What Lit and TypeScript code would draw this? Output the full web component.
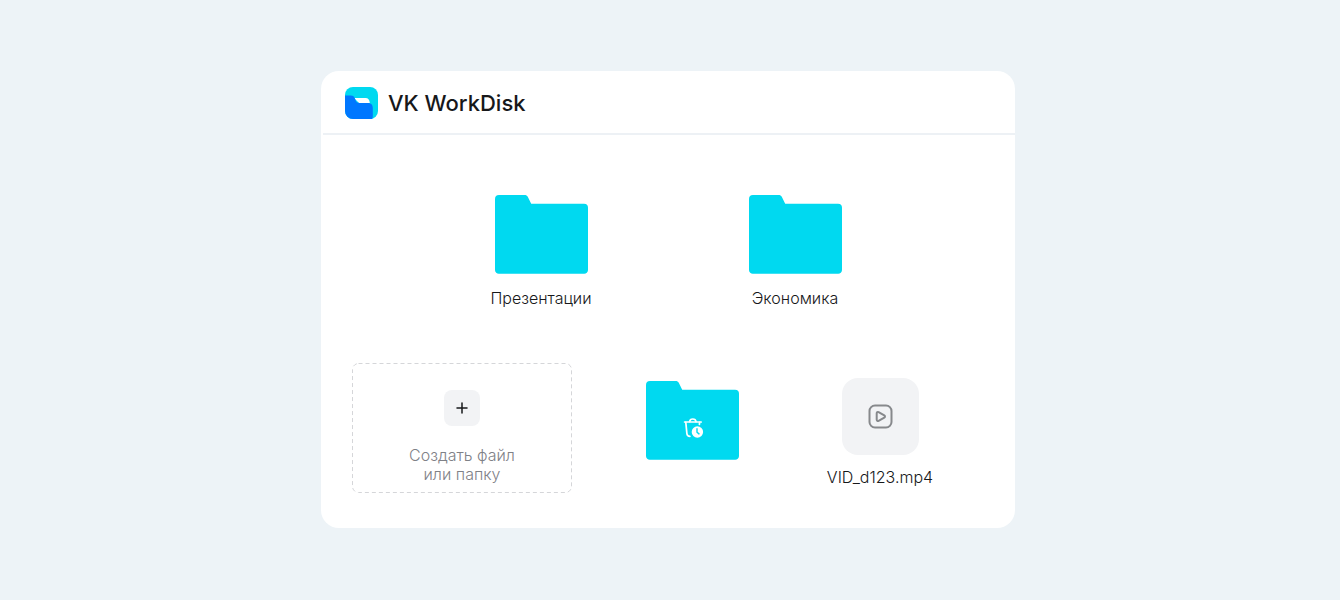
import { LitElement, html, css, svg, nothing } from "lit";
import { customElement, property } from "lit/decorators.js";

@customElement("disk-folder")
export class DiskFolder extends LitElement {
  @property() name = "";
  @property({ type: Boolean }) trash = false;

  static styles = css`
    :host {
      display: block;
    }
    .folder {
      display: flex;
      flex-direction: column;
      align-items: center;
      gap: 14px;
      color: #17181a;
      text-decoration: none;
    }
    .shape {
      display: block;
    }
    .name {
      font-size: 16px;
      line-height: 20px;
      white-space: nowrap;
    }
  `;

  private trashIcon() {
    return svg`
      <g fill="none" stroke="#fff" stroke-width="1.7" stroke-linecap="round" stroke-linejoin="round">
        <path d="M38.6 41h16.6" />
        <path d="M43.6 40.6c.2-1.6 1.4-2.6 3.2-2.6s3 1 3.2 2.6" />
        <path d="M39.8 41.4l1.1 11.2c.2 1.8 1.2 2.7 3 2.7" />
        <path d="M53.6 41.4l-.2 2" />
      </g>
      <circle cx="51.4" cy="51" r="5.7" fill="#fff" />
      <path d="M51 47.8v3.4l2 1.7" fill="none" stroke="#00d9f0" stroke-width="1.4" stroke-linecap="round" />
    `;
  }

  render() {
    return html`
      <a class="folder" href="#" aria-label=${this.name || "Корзина"}>
        <svg class="shape" width="93" height="79" viewBox="0 0 93 79" aria-hidden="true">
          <path
            fill="#00d9f0"
            d="M4 0h25.500c1.600 0 2.600.600 3.400 2l3.300 6.700H89a4 4 0 0 1 4 4V75a3.800 3.800 0 0 1-4 3.800H4A3.800 3.800 0 0 1 0 75V4a4 4 0 0 1 4-4z"
          />
          ${this.trash ? this.trashIcon() : nothing}
        </svg>
        ${this.name ? html`<span class="name">${this.name}</span>` : nothing}
      </a>
    `;
  }
}

@customElement("app-root")
export class AppRoot extends LitElement {
  static styles = css`
    :host {
      display: flex;
      align-items: center;
      justify-content: center;
      box-sizing: border-box;
      min-height: 100vh;
      padding: 16px 20px 17px 16px;
      background: #edf3f7;
      font-family: Inter, "Noto Sans", sans-serif;
      font-weight: 300;
      color: #17181a;
    }
    .card {
      width: 100%;
      max-width: 694px;
      border-radius: 18px;
      background: #fff;
      overflow: hidden;
    }
    .header {
      display: flex;
      align-items: center;
      gap: 10px;
      margin-left: 2px;
      padding: 16px 22px 14px;
      border-bottom: 2px solid #edf1f5;
    }
    .logo {
      display: block;
    }
    .title {
      margin: 0;
      font-size: 22px;
      line-height: 32px;
      font-weight: 500;
    }
    .folders {
      display: grid;
      grid-template-columns: repeat(2, 254px);
      justify-content: center;
      padding-top: 60px;
    }
    .files {
      display: grid;
      grid-template-columns: 220px 1fr 134px;
      padding: 55px 68px 35px 31px;
    }
    .create {
      position: relative;
      display: flex;
      flex-direction: column;
      align-items: center;
      gap: 20px;
      padding: 27px 8px 9px;
      border: 0;
      background: none;
      font: inherit;
      font-size: 16px;
      line-height: 19px;
      color: #7f8187;
      cursor: pointer;
    }
    .outline {
      position: absolute;
      inset: 0;
      width: 100%;
      height: 100%;
    }
    .dashes {
      x: 0.5px;
      y: 0.5px;
      width: calc(100% - 1px);
      height: calc(100% - 1px);
    }
    .plus {
      display: grid;
      place-items: center;
      width: 36px;
      height: 36px;
      border-radius: 8px;
      background: #f2f3f5;
    }
    .trash {
      padding-top: 18px;
    }
    .video {
      display: flex;
      flex-direction: column;
      align-items: center;
      gap: 12px;
      padding-top: 15px;
      color: inherit;
      text-decoration: none;
      font-size: 16px;
      line-height: 20px;
    }
    .preview {
      display: grid;
      place-items: center;
      width: 77px;
      height: 77px;
      border-radius: 16px;
      background: #f2f3f5;
    }
  `;

  render() {
    return html`
      <main class="card">
        <header class="header">
          <svg class="logo" width="33" height="32" viewBox="0 0 33 32" aria-hidden="true">
            <rect width="33" height="32" rx="8" fill="#00d9f0" />
            <path fill="#fff" d="M9 11h11.500c2.600 0 4 1.600 4.300 5H14z" />
            <path
              fill="#07f"
              d="M0 8.500h5.800c2 0 3.200.800 3.900 2.500l1 2.500c.700 1.800 1.900 2.500 3.900 2.500h7.900c3.600 0 5.300 1.700 5.300 5.300V28c0 2-.100 3-.700 4H8a8 8 0 0 1-8-8z"
            />
          </svg>
          <h1 class="title">VK WorkDisk</h1>
        </header>
        <section class="folders">
          <disk-folder name="Презентации"></disk-folder>
          <disk-folder name="Экономика"></disk-folder>
        </section>
        <section class="files">
          <button class="create" type="button">
            <svg class="outline" aria-hidden="true">
              <rect class="dashes" rx="6" fill="none" stroke="#d5d6d9" stroke-dasharray="4 3" />
            </svg>
            <span class="plus">
              <svg width="12" height="12" viewBox="0 0 12 12" aria-hidden="true">
                <path d="M6 1v10M1 6h10" stroke="#17181a" stroke-width="1.500" stroke-linecap="round" />
              </svg>
            </span>
            <span>Создать файл<br />или папку</span>
          </button>
          <disk-folder class="trash" trash></disk-folder>
          <a class="video" href="#">
            <span class="preview">
              <svg width="25" height="25" viewBox="0 0 25 25" fill="none" stroke="#87898c" stroke-width="2" aria-hidden="true">
                <rect x="1.500" y="1.500" width="22" height="22" rx="5.500" />
                <path
                  stroke-linejoin="round"
                  d="M8.700 9.400c0-1.100 1-1.700 1.900-1.200l5.700 3.200c.900.500.900 1.700 0 2.200l-5.700 3.200c-.900.500-1.900-.100-1.900-1.200z"
                />
              </svg>
            </span>
            <span>VID_d123.mp4</span>
          </a>
        </section>
      </main>
    `;
  }
}
